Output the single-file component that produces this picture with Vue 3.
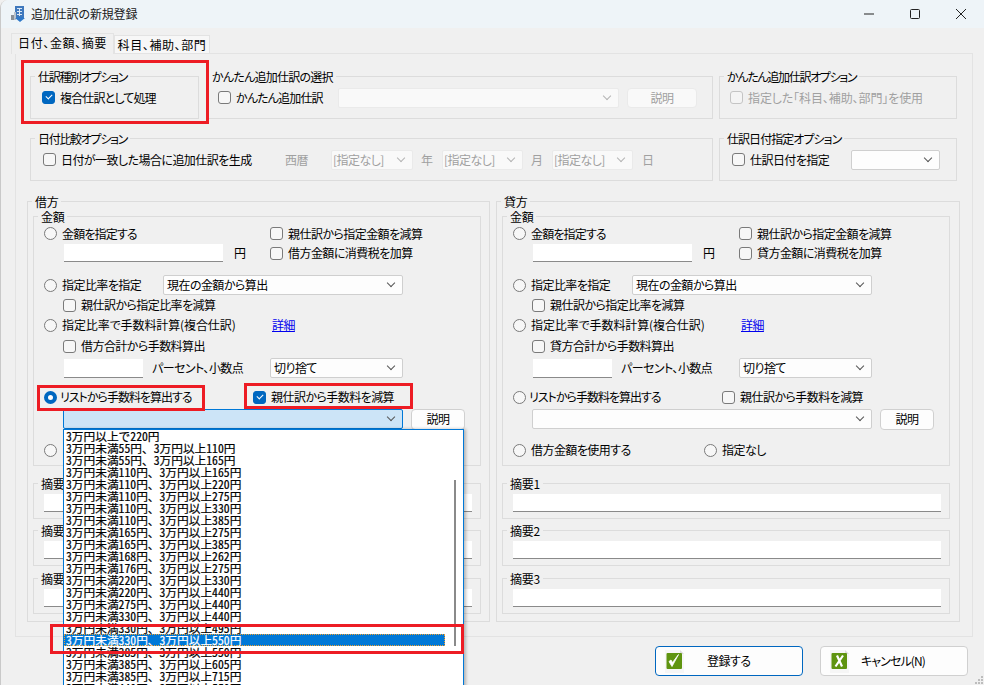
<script setup>
const sides = [
  { key: 'dr', name: '借方', first: '借方', use: '', memo: ['摘要', '摘要', '摘要'], selected: true },
  { key: 'cr', name: '貸方', first: '貸方', use: '借方金額を使用する', memo: ['摘要1', '摘要2', '摘要3'], selected: false }
]
const amounts = ['3万円未満55円、3万円以上110円','3万円未満55円、3万円以上165円','3万円未満110円、3万円以上165円','3万円未満110円、3万円以上220円','3万円未満110円、3万円以上275円','3万円未満110円、3万円以上330円','3万円未満110円、3万円以上385円','3万円未満165円、3万円以上275円','3万円未満165円、3万円以上385円','3万円未満168円、3万円以上262円','3万円未満176円、3万円以上275円','3万円未満220円、3万円以上330円','3万円未満220円、3万円以上440円','3万円未満275円、3万円以上440円','3万円未満330円、3万円以上440円','3万円未満330円、3万円以上495円','3万円未満330円、3万円以上550円','3万円未満385円、3万円以上550円','3万円未満385円、3万円以上605円','3万円未満385円、3万円以上715円','3万円未満440円、3万円以上550円']
const items = ['3万円以上で220円', ...amounts]
</script>

<template>
  <div class="window">
    <header class="titlebar">
      <svg class="appicon" width="16" height="18" viewBox="0 0 16 18">
        <path d="M5 1h9v12H5z" fill="#3f78bd"/>
        <path d="M7 3h5v1H7zM7 6h5v1H7zM7 9h5v1H7z" fill="#dbe8f5"/>
        <path d="M9 3h1v8H9z" fill="#dbe8f5"/>
        <path d="M1 10h3v5H1z" fill="#8a8f96"/>
        <path d="M4 7h2v8H4z" fill="#b9c2cc"/>
        <path d="M7 12h6v1h2l-5 4-5-4h2z" fill="#2f78c8"/>
      </svg>
      <span class="title">追加仕訳の新規登録</span>
      <div class="caption">
        <svg width="12" height="12" viewBox="0 0 12 12"><path d="M1 6h10" stroke="#222" fill="none"/></svg>
        <svg width="12" height="12" viewBox="0 0 12 12"><rect x="1.500" y="1.500" width="9" height="9" rx="1" stroke="#222" fill="none"/></svg>
        <svg width="12" height="12" viewBox="0 0 12 12"><path d="M1 1l10 10M11 1L1 11" stroke="#222" fill="none"/></svg>
      </div>
    </header>

    <div class="client">
      <nav class="tabs">
        <div class="tab active">日付、金額、摘要</div>
        <div class="tab">科目、補助、部門</div>
      </nav>

      <section class="panel">
        <div class="row-a">
          <div class="group">
            <span class="legend squeeze">仕訳種別オプション</span>
            <label class="line pl-g1"><i class="check on"></i><span class="t narrow">複合仕訳として処理</span></label>
          </div>
          <div class="group">
            <span class="legend near">かんたん追加仕訳の選択</span>
            <div class="line pl-g2">
              <i class="check"></i><span class="t w-g2 narrow">かんたん追加仕訳</span>
              <div class="select off w281"></div>
              <button class="btn off w70">説明</button>
            </div>
          </div>
          <div class="group">
            <span class="legend squeeze">かんたん追加仕訳オプション</span>
            <label class="line pl-g3 grey"><i class="check off"></i><span class="t wide">指定した｢科目、補助、部門｣を使用</span></label>
          </div>
        </div>

        <div class="row-b">
          <div class="group">
            <span class="legend squeeze">日付比較オプション</span>
            <div class="line pl-g1b">
              <i class="check"></i><span class="t w-cmp">日付が一致した場合に追加仕訳を生成</span>
              <span class="grey w-era">西暦</span><div class="select off w82">[指定なし]</div>
              <span class="grey w-unit">年</span><div class="select off w81">[指定なし]</div>
              <span class="grey w-unit">月</span><div class="select off w81">[指定なし]</div>
              <span class="grey day">日</span>
            </div>
          </div>
          <div class="group">
            <span class="legend semi">仕訳日付指定オプション</span>
            <div class="line pl-g5">
              <i class="check"></i><span class="t w-g5">仕訳日付を指定</span>
              <div class="select w89"></div>
            </div>
          </div>
        </div>

        <div class="row-c">
          <div v-for="s in sides" :key="s.key" class="group side">
            <span class="legend">{{ s.name }}</span>
            <div class="group amount">
              <span class="legend">金額</span>
              <div class="r r1">
                <div class="cell c226"><i class="radio"></i><span class="t narrow">金額を指定する</span></div>
                <i class="check"></i><span class="t">親仕訳から指定金額を減算</span>
              </div>
              <div class="r r2">
                <div class="cell c226 ind20"><div class="input w159"></div><span class="yen">円</span></div>
                <i class="check"></i><span class="t">{{ s.first }}金額に消費税を加算</span>
              </div>
              <div class="r r3">
                <div class="cell c119"><i class="radio"></i><span class="t">指定比率を指定</span></div>
                <div class="select w240">現在の金額から算出</div>
              </div>
              <div class="r r4 ind19"><i class="check"></i><span class="t">親仕訳から指定比率を減算</span></div>
              <div class="r r5">
                <div class="cell c228"><i class="radio"></i><span class="t wide">指定比率で手数料計算(複合仕訳)</span></div>
                <a class="link">詳細</a>
              </div>
              <div class="r r6 ind19"><i class="check"></i><span class="t">{{ s.first }}合計から手数料算出</span></div>
              <div class="r r7">
                <div class="cell c226 ind20"><div class="input w79"></div><span class="pct">パーセント、小数点</span></div>
                <div class="select w133">切り捨て</div>
              </div>
              <div class="r r8">
                <div class="cell c209"><i class="radio" :class="{ on: s.selected }"></i><span class="t tight">リストから手数料を算出する</span></div>
                <i class="check" :class="{ on: s.selected }"></i><span class="t">親仕訳から手数料を減算</span>
              </div>
              <div class="r r9 ind19">
                <div class="select w340" :class="{ focus: s.selected }"></div>
                <button class="btn w54">説明</button>
              </div>
              <div class="r r10">
                <div class="cell c191"><i class="radio"></i><span v-if="s.use" class="t">{{ s.use }}</span></div>
                <template v-if="s.use"><i class="radio"></i><span class="t">指定なし</span></template>
              </div>
            </div>
            <div v-for="(m, n) in s.memo" :key="n" class="group memo" :class="'m' + (n + 1)">
              <span class="legend">{{ m }}</span>
              <div class="input full"></div>
            </div>
          </div>
        </div>
      </section>

      <footer class="actions">
        <button class="action primary">
          <svg class="act-icon" width="24" height="24" viewBox="0 0 24 24">
            <path d="M2 1h15l4 4v19H2z" fill="#f6f6f6"/>
            <path d="M17 1l4 4h-4z" fill="#dcdcdc"/>
            <rect x="3.500" y="4" width="15.500" height="16" rx="1" fill="#5f9410"/>
            <path d="M6 12.500l3 5 6.500-12-6 8-1.500-2.500z" fill="#fff" stroke="#fff" stroke-width=".8"/>
          </svg>
          <span class="act-text">登録する</span>
        </button>
        <button class="action">
          <svg class="act-icon" width="24" height="24" viewBox="0 0 24 24">
            <path d="M2 1h15l4 4v19H2z" fill="#f6f6f6"/>
            <path d="M17 1l4 4h-4z" fill="#dcdcdc"/>
            <rect x="3.500" y="4" width="15.500" height="16" rx="1" fill="#5f9410"/>
            <path d="M9 6.500l5 11M15 6.500L7.500 17.500" stroke="#fff" stroke-width="2.200" fill="none"/>
          </svg>
          <span class="act-text cancel">キャンセル(N)</span>
        </button>
      </footer>
    </div>

    <svg class="grip" width="10" height="10" viewBox="0 0 10 10" fill="#bdbdbd">
      <rect x="7" y="1" width="2" height="2"/><rect x="4" y="4" width="2" height="2"/><rect x="7" y="4" width="2" height="2"/>
      <rect x="1" y="7" width="2" height="2"/><rect x="4" y="7" width="2" height="2"/><rect x="7" y="7" width="2" height="2"/>
    </svg>

    <div class="drop">
      <div v-for="(it, i) in items" :key="i" class="opt" :class="{ sel: i === 17 }">{{ it }}</div>
      <div class="thumb"></div>
    </div>

    <div class="mark m-a"></div>
    <div class="mark m-b"></div>
    <div class="mark m-c"></div>
    <div class="mark m-d"></div>
  </div>
</template>

<style>
html, body { margin: 0; padding: 0; background: #f0f0f0; overflow: hidden; }
</style>

<style scoped>
.window {
  position: relative; width: 984px; height: 685px; overflow: hidden;
  background: #f0f0f0; color: #000;
  font-family: "Noto Sans CJK JP", "Noto Sans", sans-serif;
  font-size: 12px; line-height: 16px; letter-spacing: -0.55px; font-feature-settings: "palt" 1;
  box-sizing: border-box; border-left: 1px solid #c9c9c9;
  border-top-left-radius: 8px;
}
.titlebar {
  height: 28px; display: flex; align-items: center; background: #eef4f8;
  padding-left: 9px; box-sizing: border-box;
}
.appicon { margin-right: 5px; }
.title { font-size: 12px; letter-spacing: -0.2px; font-feature-settings: normal; color: #1a1a1a; }
.caption { margin-left: auto; display: flex; gap: 34px; padding-right: 17px; }
.caption svg { display: block; }

.client { padding-left: 10px; }
.tabs { display: flex; align-items: flex-end; height: 25px; box-sizing: border-box; position: relative; z-index: 1; }
.tab {
  height: 18px; line-height: 17px; width: 96px; text-align: center; box-sizing: border-box;
  background: #f7f7f7; border: 1px solid #e3e3e3; border-bottom: 0; letter-spacing: 0.6px;
}
.tab.active {
  width: 103px; height: 21px; line-height: 18px; background: #f0f0f0; margin-bottom: -1px;
}
.panel {
  margin-left: 4px; width: 958px; height: 584px; box-sizing: border-box;
  border: 1px solid #e3e3e3; padding: 22px 0 0 11px;
}
.group { position: relative; border: 1px solid #dcdcdc; box-sizing: border-box; }
.legend {
  position: absolute; left: 4px; top: -8px; padding: 0 3px; background: #f0f0f0;
  line-height: 15px; white-space: nowrap; letter-spacing: -0.3px;
}
.legend.near { left: 0; letter-spacing: -0.75px; }
.legend.squeeze { letter-spacing: -1.3px; }
.legend.semi { letter-spacing: -0.95px; }
.row-a, .row-b { display: grid; height: 43px; margin-left: 3px; }
.row-a { grid-template-columns: 169px 514px 244px; }
.row-a .group:nth-child(2) { margin-left: 9px; }
.row-a .group:nth-child(3) { margin-left: 6px; width: 238px; }
.row-b { grid-template-columns: 683px 238px; column-gap: 6px; margin-top: 19px; }
.row-c { display: flex; gap: 6px; margin-top: 20px; }
.side { width: 463px; height: 421px; }
.side:nth-child(2) { width: 464px; }

.line { display: flex; align-items: center; height: 100%; box-sizing: border-box; }
.pl-g1 { padding-left: 11px; }
.pl-g2 { padding-left: 9px; }
.pl-g3 { padding-left: 10px; }
.pl-g1b { padding-left: 12px; }
.pl-g5 { padding-left: 12px; }
.w-g2 { width: 102px; margin-left: 4px; }
.w-cmp { width: 224px; }
.w-era { width: 46px; }
.w-unit { width: 21px; padding-left: 8px; }
.day { margin-left: 9px; }
.w-g5 { width: 101px; }

.check, .radio { display: block; flex: none; width: 13px; height: 13px; box-sizing: border-box; background: #f7f7f7; position: relative; }
.check { border: 1px solid #7a7a7a; border-radius: 3px; }
.check.off { border-color: #c4c4c4; background: #f4f4f4; }
.check.on { background: #0067c0; border-color: #0067c0; }
.check.on::after {
  content: ""; position: absolute; left: 3px; top: 2px; width: 5px; height: 3px;
  border-left: 1px solid #fff; border-bottom: 1px solid #fff; transform: rotate(-45deg);
}
.radio { border: 1px solid #7a7a7a; border-radius: 50%; }
.radio.on { border: 4px solid #0067c0; background: #fff; }
.t { margin-left: 5px; white-space: nowrap; }
.t.tight { margin-left: 3px; letter-spacing: -1px; }
.t.narrow { letter-spacing: -0.85px; }
.t.wide { letter-spacing: -0.1px; }
.grey, .grey .t { color: #a0a0a0; }

.select {
  flex: none; height: 20px; line-height: 18px; box-sizing: border-box; background: #fdfdfd;
  border: 1px solid #cfcfcf; border-radius: 2px; padding-left: 3px; position: relative; white-space: nowrap;
}
.select::after {
  content: ""; position: absolute; right: 8px; top: 4px; width: 5px; height: 5px;
  border-right: 1px solid #555; border-bottom: 1px solid #555; transform: rotate(45deg);
}
.select.off { background: #f9f9f9; border-color: #eaeaea; color: #a0a0a0; padding-left: 1px; }
.select.off::after { border-color: #b4b4b4; }
.select.focus { background: #cce4f7; border-color: #0078d7; }
.w281 { width: 281px; } .w82 { width: 82px; } .w81 { width: 81px; } .w89 { width: 89px; }
.w240 { width: 240px; } .w133 { width: 133px; } .w340 { width: 340px; }

.btn {
  font: inherit; letter-spacing: inherit; font-feature-settings: inherit; color: #000; flex: none; height: 20px; padding: 0; box-sizing: border-box;
  background: #fdfdfd; border: 1px solid #d0d0d0; border-radius: 4px;
}
.btn.off { background: #f9f9f9; border-color: #eaeaea; color: #a0a0a0; margin-left: 8px; }
.w70 { width: 70px; } .w54 { width: 54px; margin-left: 8px; height: 21px; }

.input { flex: none; background: #fff; border-bottom: 1px solid #8a8a8a; box-sizing: border-box; height: 18px; }
.w159 { width: 159px; } .w79 { width: 79px; height: 19px; }
.yen { margin-left: 11px; }
.pct { margin-left: 9px; white-space: nowrap; }
.link { color: #0000ee; text-decoration: underline; }

.amount { margin: 14px 0 0 5px; width: 448px; height: 250px; padding: 7px 0 0 10px; }
.r { display: flex; align-items: center; height: 20px; }
.r1 { height: 19px; }
.r3 { margin-top: 12px; }
.r6 { margin-top: 1px; }
.r7 { margin-top: 2px; }
.r8 { margin-top: 9px; }
.r9 { margin-top: 2px; }
.r10 { margin-top: 11px; }
.cell { display: flex; align-items: center; flex: none; box-sizing: border-box; }
.c226 { width: 226px; } .c228 { width: 228px; } .c119 { width: 119px; } .c209 { width: 209px; } .c191 { width: 191px; }
.ind20 { padding-left: 20px; }
.ind19 { padding-left: 19px; }

.memo { margin: 0 0 0 5px; width: 448px; height: 36px; padding: 10px 0 0 10px; }
.m1 { margin-top: 17px; }
.m2 { margin-top: 11px; }
.m3 { margin-top: 12px; }
.input.full { width: 428px; height: 18px; }

.actions { display: flex; gap: 17px; margin-top: 9px; padding-left: 644px; }
.action {
  font: inherit; letter-spacing: inherit; font-feature-settings: inherit; color: #000; width: 148px; height: 30px; padding: 0; display: flex; align-items: center;
  position: relative; background: #fdfdfd; border: 1px solid #d0d0d0; border-radius: 4px; box-sizing: border-box;
}
.action.primary { border-color: #0067c0; }
.act-icon { margin-left: 7px; flex: none; }
.act-text { margin-left: 20px; }
.act-text.cancel { margin-left: 9px; letter-spacing: -0.9px; }
.grip { position: absolute; right: 0; bottom: 0; }

.drop {
  position: absolute; left: 62px; top: 429px; width: 401px; height: 270px; box-sizing: border-box;
  background: #fff; border: 1px solid #0078d7; overflow: hidden;
  box-shadow: 2px 0 3px rgba(0,0,0,.25);
}
.opt {
  height: 12px; line-height: 12px; padding-left: 2px; width: 381px; box-sizing: border-box;
  font-size: 11.700px; letter-spacing: 0; font-feature-settings: "hwid" 1; white-space: nowrap; color: #000;
  -webkit-text-stroke: 0.2px currentColor;
}
.opt.sel { background: #0078d7; color: #fff; outline: 1px dotted #f0a030; outline-offset: -1px; }
.thumb { position: absolute; left: 390px; top: 50px; width: 2px; height: 166px; background: #8a8a8a; }

.mark { position: absolute; border: 3px solid #ed1c24; box-sizing: border-box; }
.m-a { left: 20px; top: 60px; width: 188px; height: 64px; }
.m-b { left: 36px; top: 385px; width: 168px; height: 26px; }
.m-c { left: 243px; top: 383px; width: 169px; height: 26px; }
.m-d { left: 49px; top: 624px; width: 414px; height: 30px; }
</style>
